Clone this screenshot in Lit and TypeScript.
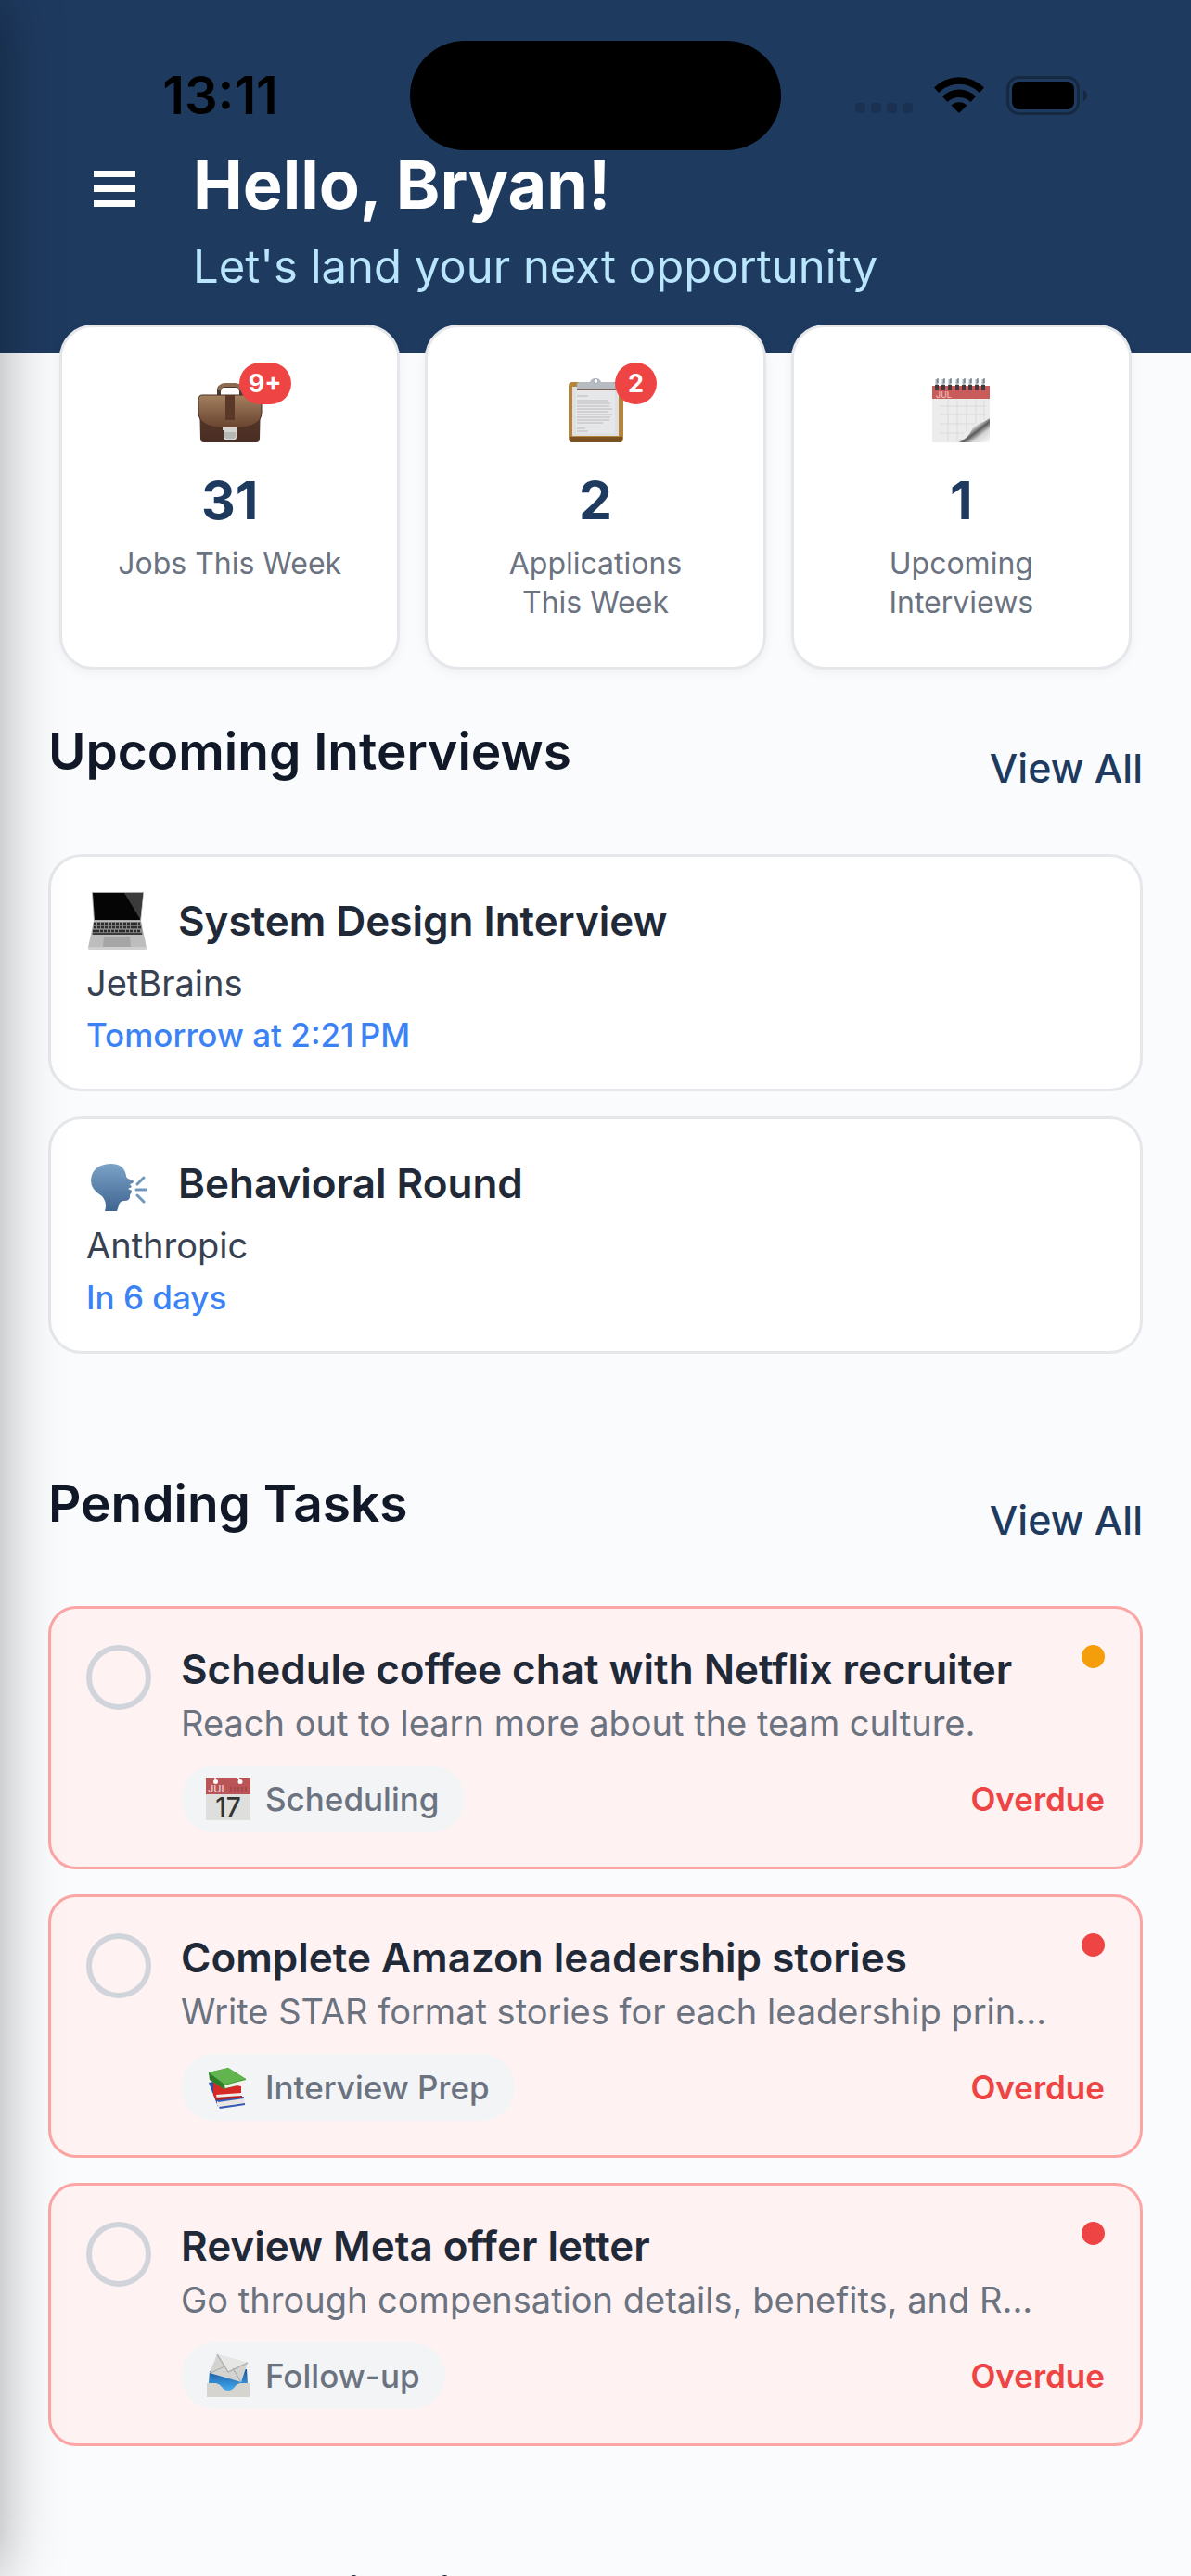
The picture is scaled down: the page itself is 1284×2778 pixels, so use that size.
// Dashboard screen of the job search tracker

import { LitElement, html, css, svg, type TemplateResult } from "lit";
import { customElement, property } from "lit/decorators.js";

// ---- icons ----

const icons: Record<string, TemplateResult> = {
    briefcase: html`
        <svg viewBox="0 0 72 72" aria-hidden="true">
            <defs>
                <linearGradient id="flap" x1="0" y1="0" x2="0" y2="1">
                    <stop offset="0" stop-color="#a3805f" />
                    <stop offset="1" stop-color="#67422f" />
                </linearGradient>
                <linearGradient id="bag" x1="0" y1="0" x2="0" y2="1">
                    <stop offset="0" stop-color="#5a3b2c" />
                    <stop offset="1" stop-color="#4a2d23" />
                </linearGradient>
            </defs>
            <path d="M24 20v-6q0-5 6-5h12q6 0 6 5v6" fill="none" stroke="#4b3a30" stroke-width="4" />
            <path d="M25 14q0-6 6-6h10q6 0 6 6" fill="none" stroke="#8d6b52" stroke-width="4" />
            <path d="M3 24h66l-1 42q0 4-4 4H8q-4 0-4-4z" fill="url(#bag)" />
            <path d="M6 19h60q4 0 4 5v14q0 17-34 17T2 38V24q0-5 4-5z" fill="url(#flap)" stroke="#4a2f24" />
            <path d="M31 19h10v27H31z" fill="#5a3827" />
            <path d="M28 54h16v3h-1v7q0 4-4 4h-6q-4 0-4-4v-7h-1z" fill="#d4d5d0" />
            <path d="M30 59h12v4q0 3-3 3h-6q-3 0-3-3z" fill="#b5b8b4" />
        </svg>
    `,
    clipboard: html`
        <svg viewBox="0 0 72 72" aria-hidden="true">
            <rect x="7" y="5" width="59" height="65" rx="4" fill="#b5853d" />
            <path d="M8 64h57v3q0 3-3 3H11q-3 0-3-3z" fill="#7d5223" />
            <path d="M11 10h50v53H11z" fill="#dfe0e1" />
            <path d="M15 14h42v46H15z" fill="#e6e7e8" />
            <g stroke="#b9babc" stroke-width="1.2">
                <path d="M16 20h12M16 25h34M16 28h36M16 31h35M16 34h38M16 37h34M16 40h38M16 43h36M16 46h35M16 49h28M16 55h9M16 58h12" />
            </g>
            <path d="M16 7q0-2 4-2h10q1-4 6-4t6 4h12q4 0 4 2v6H16z" fill="#b7bcc2" />
            <path d="M16 12h42v2H16z" fill="#77665f" />
            <circle cx="36.500" cy="4" r="2.500" fill="#fff" stroke="#9aa5b3" />
        </svg>
    `,
    notepad: html`
        <svg viewBox="0 0 72 72" aria-hidden="true">
            <defs>
                <linearGradient id="curl" x1="0" y1="0" x2="1" y2="1">
                    <stop offset="0.400" stop-color="#fafafa" />
                    <stop offset="0.570" stop-color="#5b5b5b" />
                    <stop offset="0.720" stop-color="#d6d6d6" />
                    <stop offset="1" stop-color="#fafafa" />
                </linearGradient>
            </defs>
            <path d="M5 9h62v61H5z" fill="#ececec" />
            <path d="M5 9h62v14H5z" fill="#c95b5b" />
            <path d="M13 31h50M13 40h50M13 50h38M13 60h26M22 24v46M32 24v46M42 24v34M52 24v26M61 24v22" stroke="#dadada" fill="none" />
            <text x="9" y="21.500" class="tiny">JUL</text>
            <path d="M67 44q-6 4-12 6-6 2-8 8-4 8-14 12h34z" fill="url(#curl)" />
            <g>
                ${[10, 17, 24, 32, 39, 46, 53, 60].map((x) => svg`
                    <path d="M${x} 2v8" stroke="#a9b4ba" stroke-width="3" />
                    <path d="M${x} 8v6" stroke="#43393c" stroke-width="4" />
                    <path d="M${x + 1} 1v5" stroke="#4a6070" stroke-width="1" />
                `)}
            </g>
        </svg>
    `,
    laptop: html`
        <svg viewBox="0 0 66 66" aria-hidden="true">
            <path d="M6 2h56l-3 31H8z" fill="#a8a8a8" />
            <path d="M7 3h54l-3 29H9z" fill="#050505" />
            <path d="M41 3h20l-3 28z" fill="#3b3b3b" />
            <path d="M8 33h51l6 29H2z" fill="#bdbdbd" />
            <path d="M8 34h51l2 14H6z" fill="#8a8a8a" />
            <path d="M8 36h50M8 40h51M7 44h52" stroke="#2c2c2c" stroke-width="2.500" stroke-dasharray="3 1" />
            <path d="M7 47h53" stroke="#3b3b3b" stroke-width="2" />
            <path d="M19 50h28l1 11H18z" fill="#a5a5a5" />
            <path d="M2 61h63v2q0 1-2 1H4q-2 0-2-1z" fill="#cfcfcf" />
        </svg>
    `,
    speaking: html`
        <svg viewBox="0 0 66 66" aria-hidden="true">
            <defs>
                <linearGradient id="head" x1="0" y1="0" x2="0" y2="1">
                    <stop offset="0" stop-color="#7ba2c6" />
                    <stop offset="1" stop-color="#3f6592" />
                </linearGradient>
            </defs>
            <path d="M20 63q3-9-3-16Q5 40 5 30 6 13 26 12q15 0 17 13 0 2 2 3l5 2q2 1 0 3l-3 1 2 3-4 2 4 2q0 3-2 4 1 7-6 7-5 0-6 5l-2 6z" fill="url(#head)" />
            <path d="M55 34l7-7M54 40h11M55 46l7 7" stroke="#6f97bd" stroke-width="3" stroke-linecap="round" />
        </svg>
    `,
    calendar: html`
        <svg viewBox="0 0 48 48" aria-hidden="true">
            <path d="M0 18h48v29H0z" fill="#dededc" />
            <path d="M0 1h48v18H0z" fill="#b95457" />
            <path d="M27 16v-5M31 16v-5M35 16v-5M39 16v-5M43 16v-5" stroke="#a5494d" stroke-width="2" />
            <circle cx="10.500" cy="5.500" r="2.500" fill="#fff" />
            <circle cx="37" cy="5.500" r="2.500" fill="#fff" />
            <path d="M10 0v5M34 0l3 5" stroke="#fff" stroke-width="1.500" />
            <text x="2" y="17" class="month">JUL</text>
            <text x="24" y="43" text-anchor="middle" class="date">17</text>
        </svg>
    `,
    books: html`
        <svg viewBox="0 0 48 48" aria-hidden="true">
            <path d="M3 19l5-1 8 20-3 7z" fill="#2f4fa8" />
            <path d="M12 39l28-3 2 1-1 5-26 4-3-3z" fill="#e8e6e2" />
            <path d="M12 37l29-3v2l-28 4zM14 45l28-4v2l-27 4z" fill="#3659b5" />
            <path d="M8 17l30 6v9l-28 4-2-4z" fill="#d62a26" />
            <path d="M11 32l27-2v4l-26 2z" fill="#f0eeeb" />
            <path d="M10 35l29-2v2l-28 3z" fill="#b41f1f" />
            <path d="M3 8l21-5 19 12v4L19 26 5 16z" fill="#3f9a35" />
            <path d="M3 8l21-5 19 12-23 6z" fill="#62b44f" />
            <path d="M20 22l23-6v4l-22 5z" fill="#f3f2ee" />
            <path d="M3 8l17 13v5L4 16z" fill="#2f7d2a" />
        </svg>
    `,
    mail: html`
        <svg viewBox="0 0 48 48" aria-hidden="true">
            <defs>
                <linearGradient id="tray" x1="0" y1="0" x2="0" y2="1">
                    <stop offset="0" stop-color="#17549a" />
                    <stop offset="1" stop-color="#45b0f5" />
                </linearGradient>
            </defs>
            <path d="M4 19l40-2 1 16q-10 1-13 5-3 3-8 3t-8-3q-3-5-13-6z" fill="url(#tray)" />
            <path d="M12 1l33 9-7 21-34-10z" fill="#d3d3d2" />
            <path d="M12 1l12 19 21-10" fill="#e6e6e5" stroke="#aaa" stroke-width="1.200" />
            <path d="M5 21l15-7M38 31l-9-15" fill="none" stroke="#b0b0af" stroke-width="1.200" />
            <path d="M1 32h10q4 1 6 4 3 4 7 4t7-4q2-3 6-4h10v15H1z" fill="#d5d4cf" />
        </svg>
    `,
};

// ---- data ----

const stats = [
    { icon: "briefcase", badge: "9+", value: 31, label: "Jobs This Week" },
    { icon: "clipboard", badge: "2", value: 2, label: "Applications This Week" },
    { icon: "notepad", badge: "", value: 1, label: "Upcoming Interviews" },
];

const interviews = [
    { icon: "laptop", title: "System Design Interview", company: "JetBrains", when: "Tomorrow at 2:21\u202fPM" },
    { icon: "speaking", title: "Behavioral Round", company: "Anthropic", when: "In 6 days" },
];

const tasks = [
    {
        title: "Schedule coffee chat with Netflix recruiter",
        text: "Reach out to learn more about the team culture.",
        icon: "calendar",
        tag: "Scheduling",
        priority: "medium",
    },
    {
        title: "Complete Amazon leadership stories",
        text: "Write STAR format stories for each leadership prin...",
        icon: "books",
        tag: "Interview Prep",
        priority: "high",
    },
    {
        title: "Review Meta offer letter",
        text: "Go through compensation details, benefits, and R...",
        icon: "mail",
        tag: "Follow-up",
        priority: "high",
    },
];

// ---- elements ----

@customElement("status-bar")
class StatusBar extends LitElement {
    static styles = css`
        :host {
            display: grid;
            grid-template-columns: 1fr 400px 1fr;
            align-items: center;
            justify-items: center;
            padding: 44px 33px 0;
            color: #000;
        }
        .time {
            font-size: 56px;
            font-weight: 600;
            line-height: 60px;
        }
        .island {
            width: 100%;
            height: 118px;
            border-radius: 59px;
            background: #000;
        }
        svg {
            display: block;
            width: 250px;
            height: 42px;
        }
    `;

    render() {
        return html`
            <span class="time">13:11</span>
            <div class="island"></div>
            <svg viewBox="0 0 250 42" aria-hidden="true">
                <g fill="#1a3152">
                    <rect x="0" y="29" width="11" height="11" rx="4" />
                    <rect x="17" y="29" width="11" height="11" rx="4" />
                    <rect x="34" y="29" width="11" height="11" rx="4" />
                    <rect x="51" y="29" width="11" height="11" rx="4" />
                </g>
                <path d="M85 12.500a38 38 0 0 1 54 0l-5 5.500a31 31 0 0 0-44 0z" />
                <path d="M94 22a25.500 25.500 0 0 1 36 0l-5.500 6a18 18 0 0 0-25 0z" />
                <path d="M103.500 31.500a12.500 12.500 0 0 1 17 0L112 40z" />
                <rect x="164.500" y="1.500" width="76" height="39" rx="12" fill="none" stroke="#152943" stroke-width="3" />
                <rect x="169" y="6" width="67" height="30" rx="8" />
                <path d="M246 15q4 2 4 6t-4 6z" fill="#152943" />
            </svg>
        `;
    }
}

@customElement("stat-card")
class StatCard extends LitElement {
    @property() icon = "";
    @property() badge = "";
    @property() label = "";
    @property({ type: Number }) value = 0;

    static styles = css`
        :host {
            display: flex;
            flex-direction: column;
            align-items: center;
            padding: 54px 54px 48px;
            border: 3px solid #e5e7eb;
            border-radius: 36px;
            background: #fff;
            box-shadow: 0 3px 12px rgba(0, 0, 0, 0.05);
            text-align: center;
        }
        .icon {
            position: relative;
            width: 72px;
            height: 72px;
            margin-bottom: 31px;
        }
        .tiny {
            font-size: 9px;
            fill: #f0c9c9;
        }
        .badge {
            position: absolute;
            top: -16px;
            right: -30px;
            box-sizing: border-box;
            min-width: 45px;
            padding: 0 10px;
            border-radius: 23px;
            background: #ef4444;
            color: #fff;
            font-size: 27px;
            font-weight: 700;
            line-height: 45px;
        }
        .value {
            margin-bottom: 17px;
            color: #1e3a5f;
            font-size: 57px;
            font-weight: 700;
            line-height: 60px;
        }
        .label {
            color: #6b7280;
            font-size: 32px;
            line-height: 42px;
        }
    `;

    render() {
        return html`
            <div class="icon">
                ${icons[this.icon]}
                ${this.badge ? html`<span class="badge">${this.badge}</span>` : ""}
            </div>
            <div class="value">${this.value}</div>
            <div class="label">${this.label}</div>
        `;
    }
}

@customElement("interview-card")
class InterviewCard extends LitElement {
    @property() icon = "";
    @property() heading = "";
    @property() company = "";
    @property() when = "";

    static styles = css`
        :host {
            display: flex;
            flex-direction: column;
            gap: 10px;
            padding: 36px 38px;
            border: 3px solid #e5e7eb;
            border-radius: 36px;
            background: #fff;
        }
        .head {
            display: flex;
            align-items: center;
            gap: 33px;
        }
        .head svg {
            width: 66px;
            height: 66px;
        }
        h3 {
            margin: 0;
            color: #1f2937;
            font-size: 44px;
            font-weight: 600;
            line-height: 60px;
        }
        .company {
            color: #374151;
            font-size: 38px;
            line-height: 48px;
        }
        .when {
            color: #3b82f6;
            font-size: 35px;
            font-weight: 500;
            line-height: 44px;
        }
    `;

    render() {
        return html`
            <div class="head">
                ${icons[this.icon]}
                <h3>${this.heading}</h3>
            </div>
            <div class="company">${this.company}</div>
            <div class="when">${this.when}</div>
        `;
    }
}

@customElement("task-card")
class TaskCard extends LitElement {
    @property() heading = "";
    @property() text = "";
    @property() icon = "";
    @property() tag = "";
    @property() priority = "";

    static styles = css`
        :host {
            display: flex;
            align-items: flex-start;
            gap: 32px;
            padding: 39px 38px 37px;
            border: 3px solid #fca5a5;
            border-radius: 30px;
            background: #fef2f2;
        }
        input {
            flex: none;
            box-sizing: border-box;
            width: 70px;
            height: 70px;
            margin: 0;
            appearance: none;
            border: 6px solid #d1d5db;
            border-radius: 50%;
        }
        input:checked {
            border-color: #10b981;
            background: #10b981;
        }
        .body {
            flex: 1;
            min-width: 0;
        }
        .top,
        .bottom {
            display: flex;
            justify-content: space-between;
        }
        .top {
            gap: 30px;
            margin-bottom: 22px;
        }
        .words {
            min-width: 0;
        }
        label {
            display: block;
            margin-bottom: 8px;
            color: #1f2937;
            font-size: 44px;
            font-weight: 600;
            line-height: 52px;
            white-space: nowrap;
        }
        p {
            margin: 0;
            color: #6b7280;
            font-size: 38px;
            line-height: 48px;
            white-space: nowrap;
        }
        .dot {
            flex: none;
            width: 25px;
            height: 25px;
            border-radius: 50%;
            background: #ef4444;
        }
        .dot.medium {
            background: #f59e0b;
        }
        .bottom {
            align-items: center;
        }
        .tag {
            display: flex;
            align-items: center;
            gap: 16px;
            padding: 0 27px;
            border-radius: 36px;
            background: #f3f4f6;
            color: #6b7280;
            font-size: 35px;
            font-weight: 500;
            line-height: 72px;
        }
        .tag svg {
            width: 48px;
            height: 48px;
        }
        .month {
            font-size: 11px;
            fill: #ecd0d0;
        }
        .date {
            font-size: 28px;
            fill: #333;
        }
        .due {
            color: #ef4444;
            font-size: 35px;
            font-weight: 600;
        }
    `;

    render() {
        return html`
            <input type="checkbox" id="done">
            <div class="body">
                <div class="top">
                    <div class="words">
                        <label for="done">${this.heading}</label>
                        <p>${this.text}</p>
                    </div>
                    <span class="dot ${this.priority}"></span>
                </div>
                <div class="bottom">
                    <span class="tag">${icons[this.icon]}${this.tag}</span>
                    <span class="due">Overdue</span>
                </div>
            </div>
        `;
    }
}

@customElement("app-root")
class AppRoot extends LitElement {
    static styles = css`
        :host {
            display: block;
            height: 100vh;
            overflow: hidden;
            background: #f9fbfc;
            font-family: Inter, "Liberation Sans", sans-serif;
        }
        header {
            padding-bottom: 63px;
            background: #1e3a5f;
        }
        .greeting {
            display: flex;
            align-items: flex-start;
            gap: 62px;
            padding: 0 101px;
        }
        .menu {
            height: 82px;
            padding: 0;
            border: 0;
            background: none;
        }
        .menu svg {
            display: block;
            width: 45px;
            height: 39px;
        }
        h1 {
            margin: 0 0 22px;
            color: #fff;
            font-size: 72px;
            font-weight: 700;
            line-height: 74px;
        }
        .greeting p {
            margin: 0;
            color: #bae6fd;
            font-size: 49px;
            line-height: 60px;
        }
        .stats {
            display: grid;
            grid-template-columns: repeat(3, 1fr);
            gap: 27px;
            margin-top: -31px;
            padding: 0 64px;
        }
        section {
            padding: 55px 52px 73px;
        }
        .title {
            display: flex;
            align-items: flex-end;
            justify-content: space-between;
            margin-bottom: 66px;
        }
        h2 {
            margin: 0;
            padding-bottom: 12px;
            color: #111827;
            font-size: 55px;
            font-weight: 600;
            line-height: 66px;
        }
        a {
            color: #1e3a5f;
            font-size: 43px;
            font-weight: 500;
            line-height: 54px;
            text-decoration: none;
        }
        .list {
            display: grid;
            grid-template-columns: minmax(0, 1fr);
            gap: 27px;
        }
        /* closed side menu, only its shadow reaches the screen */
        .drawer {
            position: fixed;
            top: 0;
            bottom: 0;
            right: 100%;
            width: 80%;
            box-shadow: 0 0 60px rgba(0, 0, 0, 0.34);
        }
    `;

    render() {
        return html`
            <header>
                <status-bar></status-bar>
                <div class="greeting">
                    <button class="menu" aria-label="Menu">
                        <svg viewBox="0 0 45 39" fill="#fff" aria-hidden="true">
                            <rect y="0" width="45" height="7" />
                            <rect y="16" width="45" height="7" />
                            <rect y="32" width="45" height="7" />
                        </svg>
                    </button>
                    <div>
                        <h1>Hello, Bryan!</h1>
                        <p>Let's land your next opportunity</p>
                    </div>
                </div>
            </header>
            <main>
                <div class="stats">
                    ${stats.map((s) => html`
                        <stat-card icon=${s.icon} badge=${s.badge} value=${s.value} label=${s.label}></stat-card>
                    `)}
                </div>
                <section>
                    <div class="title">
                        <h2>Upcoming Interviews</h2>
                        <a href="#interviews">View All</a>
                    </div>
                    <div class="list">
                        ${interviews.map((i) => html`
                            <interview-card icon=${i.icon} heading=${i.title} company=${i.company} when=${i.when}></interview-card>
                        `)}
                    </div>
                </section>
                <section>
                    <div class="title">
                        <h2>Pending Tasks</h2>
                        <a href="#tasks">View All</a>
                    </div>
                    <div class="list">
                        ${tasks.map((t) => html`
                            <task-card heading=${t.title} text=${t.text} icon=${t.icon} tag=${t.tag} priority=${t.priority}></task-card>
                        `)}
                    </div>
                </section>
                <section>
                    <div class="title">
                        <h2>Recent Applications</h2>
                    </div>
                </section>
            </main>
            <div class="drawer"></div>
        `;
    }
}
